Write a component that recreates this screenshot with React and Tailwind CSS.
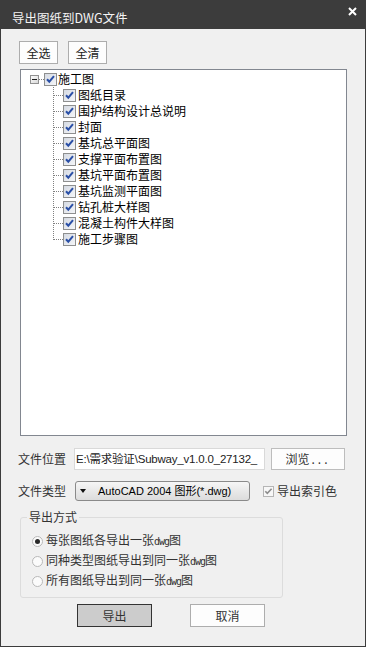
import React from "react";

const SHEETS = [
  "图纸目录",
  "围护结构设计总说明",
  "封面",
  "基坑总平面图",
  "支撑平面布置图",
  "基坑平面布置图",
  "基坑监测平面图",
  "钻孔桩大样图",
  "混凝土构件大样图",
  "施工步骤图",
];

const RADIOS = ["每张图纸各导出一张", "同种类型图纸导出到同一张", "所有图纸导出到同一张"];

function TreeCheck() {
  return (
    <svg width="13" height="13" viewBox="0 0 13 13" className="shrink-0">
      <defs>
        <linearGradient id="tcg" x1="0" y1="0" x2="1" y2="1">
          <stop offset="0" stopColor="#d4d9e2" />
          <stop offset="1" stopColor="#f6f7f9" />
        </linearGradient>
      </defs>
      <rect x="0.5" y="0.5" width="12" height="12" fill="url(#tcg)" stroke="#8e8f8f" />
      <path d="M3 6.2 L5.3 8.7 L10 3.2" fill="none" stroke="#2a4fa6" strokeWidth="2" />
    </svg>
  );
}

function Connector({ last }) {
  return (
    <svg width="10" height="16" className="shrink-0" shapeRendering="crispEdges">
      <line x1="0.5" y1="0" x2="0.5" y2={last ? 9 : 16} stroke="#808080" strokeDasharray="1 1" />
      <line x1="1" y1="8.5" x2="10" y2="8.5" stroke="#808080" strokeDasharray="1 1" />
    </svg>
  );
}

export default function App() {
  return (
    <div className="w-[366px] h-[647px] bg-[#f0f0f0] border-x border-b border-[#3c3c3c] flex flex-col font-['Noto_Sans_CJK_SC',sans-serif] text-[#222]">
      {/* TITLE BAR */}
      <div className="h-[29px] shrink-0 bg-[#3c3c3c] flex items-start justify-between pl-[11px] pr-[8px]">
        <span className="mt-[9px] text-[12.5px] leading-[18px] text-[#f4f4f4]">导出图纸到DWG文件</span>
        <svg width="9" height="9" viewBox="0 0 9 9" className="mt-[7px]">
          <path d="M1 1 L8 8 M8 1 L1 8" stroke="#ffffff" strokeWidth="2" />
        </svg>
      </div>

      <div className="flex flex-col pl-[17px]">
        {/* SELECT ALL / CLEAR */}
        <div className="mt-[12px] ml-[1px] flex gap-[10px]">
          <button className="w-[39px] h-[23px] bg-[#fdfdfd] border border-[#adadad] text-[12px] leading-[16px] text-[#222]">
            全选
          </button>
          <button className="w-[39px] h-[23px] bg-[#fdfdfd] border border-[#adadad] text-[12px] leading-[16px] text-[#222]">
            全清
          </button>
        </div>

        {/* TREE */}
        <div className="mt-[5px] ml-[2px] w-[327px] h-[367px] bg-white border border-[#828790] pt-[1px] text-[12px] leading-[16px] text-black">
          <div className="h-[16px] flex items-center pl-[9px]">
            <svg width="9" height="9" viewBox="0 0 9 9" className="shrink-0">
              <defs>
                <linearGradient id="mg" x1="0" y1="0" x2="1" y2="1">
                  <stop offset="0" stopColor="#ffffff" />
                  <stop offset="1" stopColor="#d6d6d6" />
                </linearGradient>
              </defs>
              <rect x="0.5" y="0.5" width="8" height="8" fill="url(#mg)" stroke="#919191" />
              <line x1="2" y1="4.5" x2="7" y2="4.5" stroke="#1f1f1f" />
            </svg>
            <svg width="5" height="16" className="shrink-0" shapeRendering="crispEdges">
              <line x1="0" y1="8.5" x2="5" y2="8.5" stroke="#808080" strokeDasharray="1 1" />
            </svg>
            <TreeCheck />
            <span className="ml-[1px] whitespace-nowrap">施工图</span>
          </div>
          {SHEETS.map((name, i) => (
            <div key={name} className="h-[16px] flex items-center pl-[32px]">
              <Connector last={i === SHEETS.length - 1} />
              <TreeCheck />
              <span className="ml-[2px] whitespace-nowrap">{name}</span>
            </div>
          ))}
        </div>

        {/* FILE LOCATION */}
        <div className="mt-[12px] flex items-center h-[22px]">
          <span className="w-[48px] text-[12px] leading-[16px] text-[#333]">文件位置</span>
          <div className="ml-[8px] w-[191px] h-[22px] bg-white border border-[#d9d9d9] overflow-hidden flex items-center pl-[1px]">
            <span className="whitespace-nowrap text-[11.5px] tracking-[-0.2px] leading-[16px] text-[#222] font-['Liberation_Sans','Noto_Sans_CJK_SC',sans-serif]">
              E:\需求验证\Subway_v1.0.0_27132_
            </span>
          </div>
          <button className="ml-[6px] w-[74px] h-[22px] bg-[#fdfdfd] border border-[#bdbdbd] text-[12px] leading-[16px] text-[#333]">
            浏览<span className="tracking-[3px] ml-[2px]">...</span>
          </button>
        </div>

        {/* FILE TYPE */}
        <div className="mt-[11px] flex items-center h-[20px]">
          <span className="w-[48px] text-[12px] leading-[16px] text-[#333]">文件类型</span>
          <div className="ml-[9px] w-[175px] h-[20px] rounded-[3px] border border-[#8a8a8a] bg-gradient-to-b from-[#f6f6f6] to-[#dcdcdc] flex items-center pl-[4px]">
            <svg width="6" height="4" viewBox="0 0 6 4" className="shrink-0">
              <path d="M0 0 H6 L3 4 Z" fill="#111" />
            </svg>
            <span className="ml-[12px] whitespace-nowrap text-[11px] leading-[16px] text-black font-['Liberation_Sans','Noto_Sans_CJK_SC',sans-serif]">
              AutoCAD 2004 图形(*.dwg)
            </span>
          </div>
          <div className="ml-[13px] flex items-center">
            <svg width="11" height="11" viewBox="0 0 11 11" className="shrink-0">
              <rect x="0.5" y="0.5" width="10" height="10" fill="#f7f7f7" stroke="#b5b5b5" />
              <path d="M2.3 5.3 L4.3 7.4 L8.6 2.8" fill="none" stroke="#8c8c8c" strokeWidth="1.6" />
            </svg>
            <span className="ml-[3px] text-[12px] leading-[16px] text-[#333]">导出索引色</span>
          </div>
        </div>

        {/* EXPORT MODE */}
        <fieldset className="mt-[8px] ml-[2px] w-[263px] border border-[#dcdcdc] rounded-[3px] pt-[6px] pb-[6px]">
          <legend className="ml-[6px] px-[2px] text-[12px] leading-[16px] text-[#333]">导出方式</legend>
          {RADIOS.map((label, i) => (
            <div key={label} className="h-[20px] flex items-center pl-[11px]">
              <svg width="11" height="11" viewBox="0 0 11 11" className="shrink-0">
                <circle cx="5.5" cy="5.5" r="5" fill="#fbfbfb" stroke="#b8b8b8" />
                {i === 0 && <circle cx="5.5" cy="5.5" r="2.5" fill="#2a2a2a" />}
              </svg>
              <span className="ml-[3px] whitespace-nowrap text-[12px] leading-[16px] text-[#333]">
                {label}
                <span className="text-[10px] font-['DejaVu_Sans_Mono',monospace] tracking-[-1px]">dwg</span>图
              </span>
            </div>
          ))}
        </fieldset>

        {/* ACTIONS */}
        <div className="mt-[6px] ml-[59px] flex gap-[38px]">
          <button className="w-[75px] h-[23px] bg-[#cccccc] border border-[#333333] text-[12px] leading-[16px] text-[#333]">
            导出
          </button>
          <button className="w-[75px] h-[23px] bg-[#fdfdfd] border border-[#adadad] text-[12px] leading-[16px] text-[#333]">
            取消
          </button>
        </div>
      </div>
    </div>
  );
}
